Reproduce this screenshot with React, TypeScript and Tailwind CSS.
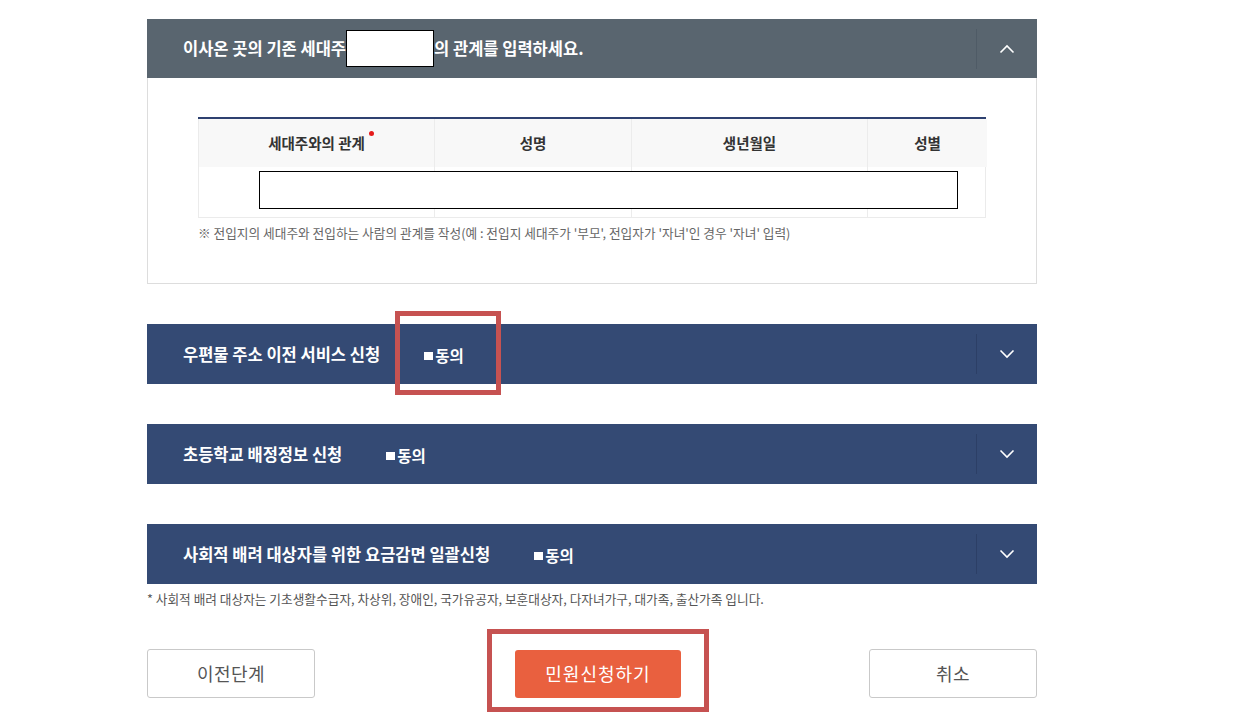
import React from "react";

const font = { fontFamily: '"Noto Sans CJK KR", "Noto Sans", sans-serif' };

function Chevron({ up }: { up?: boolean }) {
  return (
    <svg width="16" height="10" viewBox="0 0 16 10" fill="none">
      <path
        d={up ? "M1.5 8.5 L8 2 L14.5 8.5" : "M1.5 1.5 L8 8 L14.5 1.5"}
        stroke="white"
        strokeWidth="1.6"
      />
    </svg>
  );
}

function Agree() {
  return (
    <span className="flex items-center gap-[2px] text-[15.5px] font-bold text-white mt-[4px]">
      <span className="inline-block w-[9px] h-[8px] bg-white" />
      동의
    </span>
  );
}

function SectionBar({ title, highlight }: { title: string; highlight?: boolean }) {
  return (
    <div className="flex h-[60px] bg-[#344a74] items-center">
      <div className="flex-1 flex items-center pl-[36px] gap-[44px]">
        <span className="text-[16.5px] font-bold text-white">{title}</span>
        <span className="relative">
          <Agree />
          {highlight && (
            <span className="absolute left-[-29px] top-[-29px] w-[106px] h-[84px] border-[5px] border-[#c65251]" />
          )}
        </span>
      </div>
      <div className="h-[40px] w-px bg-[#2c3f66]" />
      <div className="w-[60px] flex justify-center">
        <Chevron />
      </div>
    </div>
  );
}

export default function App() {
  return (
    <div className="min-h-[716px] bg-white" style={font}>
      <div className="ml-[147px] w-[890px] pt-[19px]">
        {/* 세대주 관계 */}
        <div className="flex h-[59px] bg-[#59656f] items-center">
          <div className="flex-1 flex items-center pl-[36px] text-[16.5px] font-bold text-white">
            <span>이사온 곳의 기존 세대주</span>
            <span className="inline-block w-[88px] h-[37px] bg-white border border-black" />
            <span>의 관계를 입력하세요.</span>
          </div>
          <div className="h-[40px] w-px bg-[#4f5b66]" />
          <div className="w-[60px] flex justify-center">
            <Chevron up />
          </div>
        </div>
        <div className="border border-t-0 border-[#dddddd] h-[206px] px-[50px] pt-[39px]">
          <div className="relative border-t-2 border-[#2e4170]">
            <div className="grid grid-cols-[236px_197px_236px_119px] border-x border-b border-[#ebebeb]">
              <div className="h-[48px] bg-[#f8f8f8] flex items-center justify-center text-[14.5px] font-bold text-[#333] border-r border-[#ececec]">
                <span className="relative">
                  세대주와의 관계
                  <span className="absolute right-[-9px] top-[-1px] w-[5px] h-[5px] rounded-full bg-[#e51b1b]" />
                </span>
              </div>
              <div className="h-[48px] bg-[#f8f8f8] flex items-center justify-center text-[14.5px] font-bold text-[#333] border-r border-[#ececec]">
                성명
              </div>
              <div className="h-[48px] bg-[#f8f8f8] flex items-center justify-center text-[14.5px] font-bold text-[#333] border-r border-[#ececec]">
                생년월일
              </div>
              <div className="h-[48px] bg-[#f8f8f8] flex items-center justify-center text-[14.5px] font-bold text-[#333]">
                성별
              </div>
              <div className="h-[50px] border-r border-[#ececec]" />
              <div className="h-[50px] border-r border-[#ececec]" />
              <div className="h-[50px] border-r border-[#ececec]" />
              <div className="h-[50px]" />
            </div>
            <div className="absolute left-[61px] top-[52px] w-[699px] h-[38px] bg-white border border-black" />
          </div>
          <p className="mt-[5px] text-[12.7px] text-[#666]">
            ※ 전입지의 세대주와 전입하는 사람의 관계를 작성(예 : 전입지 세대주가 '부모', 전입자가 '자녀'인 경우 '자녀' 입력)
          </p>
        </div>

        <div className="mt-[40px] flex flex-col gap-[40px]">
          <SectionBar title="우편물 주소 이전 서비스 신청" highlight />
          <SectionBar title="초등학교 배정정보 신청" />
          <SectionBar title="사회적 배려 대상자를 위한 요금감면 일괄신청" />
        </div>
        <p className="mt-[5px] text-[12.7px] text-[#555]">
          * 사회적 배려 대상자는 기초생활수급자, 차상위, 장애인, 국가유공자, 보훈대상자, 다자녀가구, 대가족, 출산가족 입니다.
        </p>

        <div className="mt-[41px] flex items-center">
          <button className="w-[168px] h-[49px] border border-[#c9c9c9] rounded-[3px] bg-white text-[18px] text-[#555] tracking-[0.5px]">
            이전단계
          </button>
          <div className="relative ml-[200px]">
            <button className="w-[166px] h-[48px] rounded-[3px] bg-[#e9603f] text-[18px] text-white tracking-[1px]">
              민원신청하기
            </button>
            <span className="absolute left-[-28px] top-[-21px] w-[222px] h-[83px] border-[5px] border-[#c65251]" />
          </div>
          <button className="ml-auto w-[168px] h-[49px] border border-[#c9c9c9] rounded-[3px] bg-white text-[18px] text-[#555] tracking-[0.5px]">
            취소
          </button>
        </div>
      </div>
    </div>
  );
}
